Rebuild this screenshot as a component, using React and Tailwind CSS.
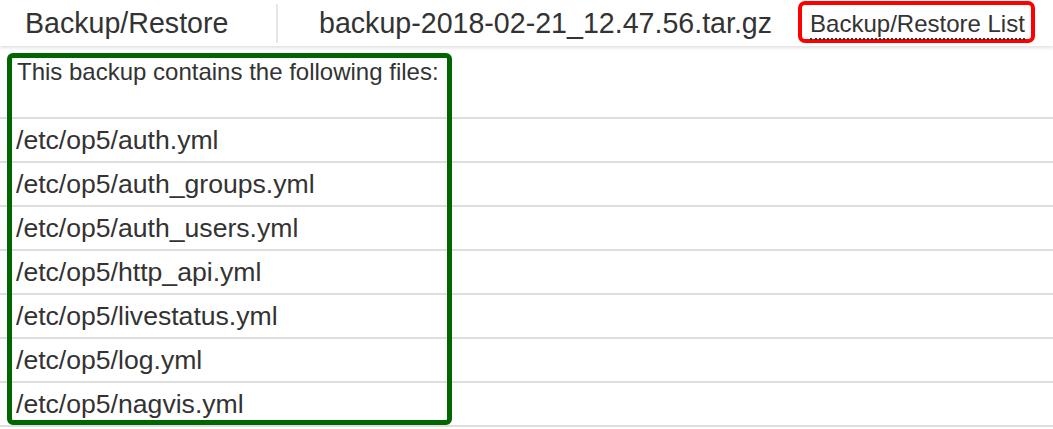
const files = [
  "/etc/op5/auth.yml",
  "/etc/op5/auth_groups.yml",
  "/etc/op5/auth_users.yml",
  "/etc/op5/http_api.yml",
  "/etc/op5/livestatus.yml",
  "/etc/op5/log.yml",
  "/etc/op5/nagvis.yml",
];

export default function App() {
  return (
    <div className="relative w-[1053px] h-[429px] overflow-hidden bg-white text-[#333] font-['Liberation_Sans',Arial,sans-serif]">
      {/* top bar */}
      <div className="relative z-10 flex items-center h-[46px] bg-white shadow-[0_2px_3px_rgba(0,0,0,0.12)]">
        <div className="pl-[25px] w-[276px] text-[28.6px] leading-none">Backup/Restore</div>
        <div className="w-[2px] h-[39px] bg-[#e6e6e6]" />
        <div className="pl-[41px] text-[28.6px] leading-none">backup-2018-02-21_12.47.56.tar.gz</div>
        <div className="ml-[26px] self-start mt-px h-[42px] w-[237px] border-4 border-[#ff0000] rounded-[7px] pl-[8px] pt-[5px]">
          <span className="text-[24px] leading-[28px] border-b-2 border-dotted border-[#333] inline-block">
            Backup/Restore List
          </span>
        </div>
      </div>

      {/* file table */}
      <div className="flex flex-col">
        <div className="h-[73px] border-b-2 border-[#dedede] pl-[17px] pt-[8px] text-[24px] leading-[36px]">
          This backup contains the following files:
        </div>
        {files.map((f) => (
          <div
            key={f}
            className="h-[44px] border-b-2 border-[#dedede] pl-[16px] flex items-center text-[26.6px] leading-none"
          >
            {f}
          </div>
        ))}
      </div>

      {/* green highlight */}
      <div className="absolute left-[7px] top-[53px] w-[445px] h-[372px] border-[5px] border-[#006600] rounded-[6px] pointer-events-none z-20" />
    </div>
  );
}
